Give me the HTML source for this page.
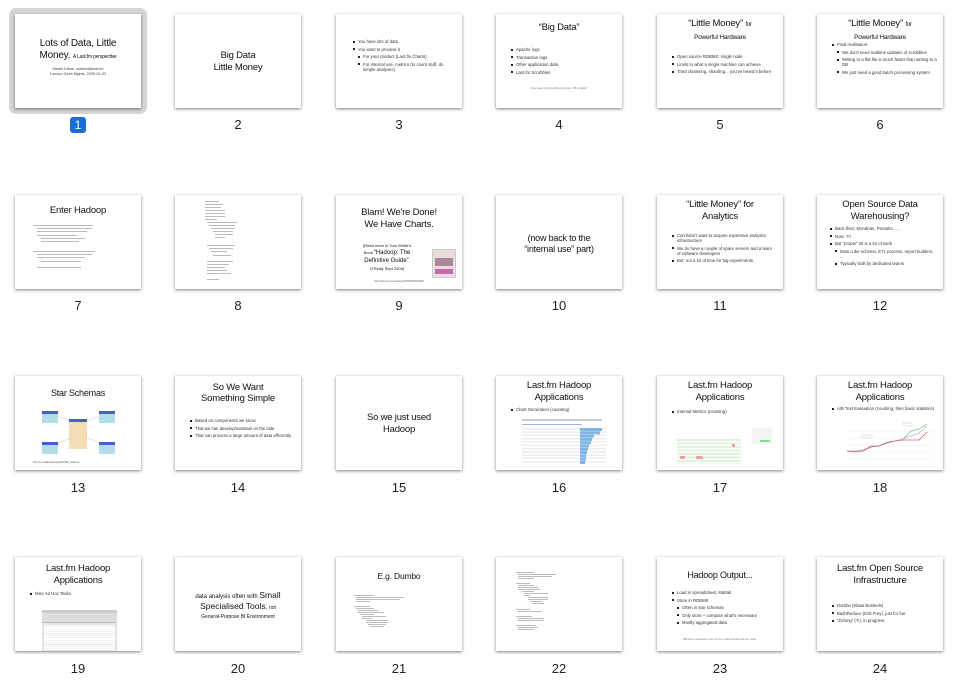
<!DOCTYPE html>
<html><head><meta charset="utf-8">
<style>
html,body{margin:0;padding:0;background:#fff;width:957px;height:684px;overflow:hidden;font-family:"Liberation Sans",sans-serif;}
.s{position:absolute;width:126px;height:94px;background:#fff;box-shadow:0 1px 3px rgba(0,0,0,.5);overflow:hidden;color:#111}
.t{position:absolute;left:0;right:0;text-align:center;font-size:9.5px;line-height:12px;letter-spacing:-.2px}
.c{position:absolute;left:0;right:0;text-align:center}
.b{position:absolute;font-size:4.3px;line-height:5.2px;color:#333}
.b p{margin:0 0 2.3px 0;padding-left:6px;position:relative}
.b p:before{content:"";position:absolute;left:1px;top:1.6px;width:2px;height:2px;background:#222}
.b p.i{margin-left:5px}
.n{position:absolute;width:126px;text-align:center;font-size:13px;line-height:15px;color:#222}
.cl{position:absolute;height:1px;background:#bbb}
.sel{position:absolute;left:9px;top:8px;width:138px;height:106px;background:#d6d6d6;border-radius:7px}
.badge{position:absolute;left:70px;top:117px;width:16px;height:16px;background:#1a6fd4;border-radius:3px;color:#fff;font-size:12px;line-height:16px;text-align:center}
</style></head><body>
<div class="sel"></div>

<!-- Row 1 -->
<div class="s" style="left:15px;top:14px">
 <div class="t" style="top:24px;font-size:10px;line-height:12px">Lots of Data, Little<br>Money. <span style="font-size:5px">A Last.fm perspective</span></div>
 <div class="c" style="top:53px;font-size:3.8px;line-height:5px;color:#444">Martin Dittus, martind@last.fm<br>London Geek Nights, 2009-04-23</div>
</div>
<div class="badge">1</div>

<div class="s" style="left:175px;top:14px">
 <div class="t" style="top:36px">Big Data<br>Little Money</div>
</div>
<div class="n" style="left:175px;top:117px">2</div>

<div class="s" style="left:336px;top:14px">
 <div class="b" style="left:16px;top:25px;width:100px">
 <p>You have lots of data</p><p>You want to process it</p><p class="i">For your product (Last.fm Charts)</p><p class="i">For internal use, metrics (to count stuff, do simple analyses)</p></div>
</div>
<div class="n" style="left:336px;top:117px">3</div>

<div class="s" style="left:496px;top:14px">
 <div class="t" style="top:8px">“Big Data”</div>
 <div class="b" style="left:14px;top:33px;width:100px"><p>Apache logs</p><p>Transaction logs</p><p>Other application data</p><p>Last.fm Scrobbles</p></div>
 <div class="c" style="top:73px;font-size:2.6px;color:#777">(how many is this justifying storing 1 TB of data?)</div>
</div>
<div class="n" style="left:496px;top:117px">4</div>

<div class="s" style="left:657px;top:14px">
 <div class="t" style="top:4px;line-height:11px">“Little Money” <span style="font-size:6px">for</span><br><span style="font-size:6.5px">Powerful Hardware</span></div>
 <div class="b" style="left:14px;top:40px;width:106px"><p>Open source RDBMS: single node</p><p>Limits to what a single machine can achieve</p><p>Tried clustering, sharding... you've heard it before</p></div>
</div>
<div class="n" style="left:657px;top:117px">5</div>

<div class="s" style="left:817px;top:14px">
 <div class="t" style="top:4px;line-height:11px">“Little Money” <span style="font-size:6px">for</span><br><span style="font-size:6.5px">Powerful Hardware</span></div>
 <div class="b" style="left:14px;top:28px;width:106px"><p>Final realisation:</p><p class="i">We don't need realtime updates of scrobbles</p><p class="i">Writing to a flat file is much faster than writing to a DB</p><p class="i">We just need a good batch processing system</p></div>
</div>
<div class="n" style="left:817px;top:117px">6</div>

<!-- Row 2 -->
<div class="s" style="left:15px;top:195px">
 <div class="t" style="top:10px">Enter Hadoop</div>
 <div class="cl" style="left:18px;top:30px;width:60px"></div><div class="cl" style="left:22px;top:33px;width:55px"></div><div class="cl" style="left:22px;top:36px;width:50px"></div><div class="cl" style="left:22px;top:40px;width:40px"></div><div class="cl" style="left:26px;top:43px;width:44px"></div><div class="cl" style="left:26px;top:46px;width:38px"></div>
 <div class="cl" style="left:18px;top:56px;width:62px"></div><div class="cl" style="left:22px;top:59px;width:55px"></div><div class="cl" style="left:22px;top:62px;width:48px"></div><div class="cl" style="left:26px;top:66px;width:40px"></div><div class="cl" style="left:22px;top:72px;width:44px"></div>
</div>
<div class="n" style="left:15px;top:298px">7</div>

<div class="s" style="left:175px;top:195px">
 <div class="cl" style="left:30px;top:6px;width:14px"></div><div class="cl" style="left:30px;top:9px;width:18px"></div><div class="cl" style="left:30px;top:12px;width:16px"></div><div class="cl" style="left:30px;top:15px;width:20px"></div><div class="cl" style="left:30px;top:18px;width:20px"></div><div class="cl" style="left:30px;top:21px;width:20px"></div><div class="cl" style="left:30px;top:24px;width:12px"></div><div class="cl" style="left:32px;top:27px;width:30px"></div><div class="cl" style="left:34px;top:30px;width:26px"></div><div class="cl" style="left:36px;top:33px;width:24px"></div><div class="cl" style="left:38px;top:36px;width:20px"></div><div class="cl" style="left:40px;top:39px;width:18px"></div><div class="cl" style="left:40px;top:42px;width:10px"></div>
 <div class="cl" style="left:32px;top:50px;width:28px"></div><div class="cl" style="left:34px;top:53px;width:24px"></div><div class="cl" style="left:36px;top:56px;width:16px"></div><div class="cl" style="left:38px;top:60px;width:18px"></div><div class="cl" style="left:32px;top:66px;width:26px"></div><div class="cl" style="left:32px;top:69px;width:22px"></div><div class="cl" style="left:32px;top:72px;width:18px"></div><div class="cl" style="left:32px;top:75px;width:20px"></div><div class="cl" style="left:32px;top:78px;width:24px"></div><div class="cl" style="left:32px;top:84px;width:12px"></div>
</div>
<div class="n" style="left:175px;top:298px">8</div>

<div class="s" style="left:336px;top:195px">
 <div class="t" style="top:12px;line-height:12px">Blam! We're Done!<br>We Have Charts.</div>
 <div class="c" style="top:47px;right:24px;font-size:4px;line-height:7px">(Read more in Tom White's<br>Book <span style="font-size:6px">“Hadoop: The<br>Definitive Guide”</span>,<br>O'Reilly Sept 2009)</div>
 <div style="position:absolute;left:96px;top:54px;width:22px;height:27px;background:#e8dcdc;border:1px solid #ccc"><div style="margin:8px 2px 0;height:8px;background:#a89"></div><div style="margin:3px 2px;height:5px;background:#c6a"></div></div>
 <div class="c" style="top:85px;font-size:2.6px;color:#666">http://feedt.ly.com/catalog/9780596521998/</div>
</div>
<div class="n" style="left:336px;top:298px">9</div>

<div class="s" style="left:496px;top:195px">
 <div class="t" style="top:38px;font-size:9px;line-height:11px">(now back to the<br>“internal use” part)</div>
</div>
<div class="n" style="left:496px;top:298px">10</div>

<div class="s" style="left:657px;top:195px">
 <div class="t" style="top:4px">“Little Money” for<br>Analytics</div>
 <div class="b" style="left:14px;top:38px;width:104px"><p>Can't/don't want to acquire expensive analytics infrastructure</p><p>We do have a couple of spare servers and a team of software developers</p><p>But: not a lot of time for big experiments</p></div>
</div>
<div class="n" style="left:657px;top:298px">11</div>

<div class="s" style="left:817px;top:195px">
 <div class="t" style="top:4px">Open Source Data<br>Warehousing?</div>
 <div class="b" style="left:12px;top:31px;width:106px"><p>Back then: Mondrian, Pentaho, ...</p><p>Now: ?!!</p><p>But "proper" BI is a lot of work</p><p class="i">Data cube schema, ETL process, report builders, ...</p><p class="i">Typically built by dedicated teams</p></div>
</div>
<div class="n" style="left:817px;top:298px">12</div>

<!-- Row 3 -->
<div class="s" style="left:15px;top:376px">
 <div class="t" style="top:11px;font-size:9px">Star Schemas</div>
 <svg style="position:absolute;left:0;top:0" width="126" height="94"><g stroke="#ccd" stroke-width=".6"><line x1="34" y1="38" x2="62" y2="46"/><line x1="92" y1="38" x2="68" y2="46"/><line x1="34" y1="70" x2="62" y2="60"/><line x1="92" y1="70" x2="68" y2="60"/></g>
 <rect x="27" y="35" width="16" height="12" fill="#b3dde8"/><rect x="27" y="35" width="16" height="3" fill="#4a5fc8"/>
 <rect x="84" y="35" width="16" height="12" fill="#b3dde8"/><rect x="84" y="35" width="16" height="3" fill="#4a5fc8"/>
 <rect x="27" y="66" width="16" height="12" fill="#b3dde8"/><rect x="27" y="66" width="16" height="3" fill="#4a5fc8"/>
 <rect x="84" y="66" width="16" height="12" fill="#b3dde8"/><rect x="84" y="66" width="16" height="3" fill="#4a5fc8"/>
 <rect x="54" y="43" width="18" height="30" fill="#f5dcb8"/><rect x="54" y="43" width="18" height="3" fill="#4a5fc8"/></svg>
 <div style="position:absolute;left:18px;top:85px;font-size:2.6px;color:#555">http://en.wikipedia.org/wiki/Star_schema</div>
</div>
<div class="n" style="left:15px;top:480px">13</div>

<div class="s" style="left:175px;top:376px">
 <div class="t" style="top:6px;line-height:11px">So We Want<br>Something Simple</div>
 <div class="b" style="left:14px;top:42px;width:104px"><p>Based on components we know</p><p>That we can develop/maintain on the side</p><p>That can process a large amount of data efficiently</p></div>
</div>
<div class="n" style="left:175px;top:480px">14</div>

<div class="s" style="left:336px;top:376px">
 <div class="t" style="top:36px">So we just used<br>Hadoop</div>
</div>
<div class="n" style="left:336px;top:480px">15</div>

<div class="s" style="left:496px;top:376px">
 <div class="t" style="top:4px">Last.fm Hadoop<br>Applications</div>
 <div class="b" style="left:14px;top:31px;width:104px"><p>Chart Generation (counting)</p></div>
 <div style="position:absolute;left:26px;top:43px;width:80px;height:2px;background:#ccc"></div>
 <div style="position:absolute;left:26px;top:48px;width:60px;height:1px;background:#9bd"></div>
 <div style="position:absolute;left:26px;top:52px;width:84px;height:36px;background:repeating-linear-gradient(#eee 0 1.5px,#fff 1.5px 3.3px)"></div>
 <svg style="position:absolute;left:84px;top:52px" width="30" height="36"><g fill="#7fb6e4"><rect x="0" y="0" width="22" height="3"/><rect x="0" y="3.3" width="20" height="3"/><rect x="0" y="6.6" width="14" height="3"/><rect x="0" y="9.9" width="12" height="3"/><rect x="0" y="13.2" width="11" height="3"/><rect x="0" y="16.5" width="9" height="3"/><rect x="0" y="19.8" width="8" height="3"/><rect x="0" y="23.1" width="7" height="3"/><rect x="0" y="26.4" width="6" height="3"/><rect x="0" y="29.7" width="6" height="3"/><rect x="0" y="33" width="5" height="3"/></g></svg>
</div>
<div class="n" style="left:496px;top:480px">16</div>

<div class="s" style="left:657px;top:376px">
 <div class="t" style="top:4px">Last.fm Hadoop<br>Applications</div>
 <div class="b" style="left:14px;top:33px;width:104px"><p>Internal Metrics (counting)</p></div>
 <div style="position:absolute;left:95px;top:52px;width:20px;height:16px;background:#f4f4f4"><div style="margin:12px 0 0 8px;width:10px;height:2px;background:#8d8"></div></div>
 <div style="position:absolute;left:20px;top:63px;width:64px;height:25px;background:repeating-linear-gradient(#dff3dc 0 2px,#fff 2px 3.5px)"></div>
 <div style="position:absolute;left:23px;top:80px;width:5px;height:3px;background:#f3a0a0"></div>
 <div style="position:absolute;left:39px;top:80px;width:7px;height:3px;background:#f3a0a0"></div>
 <div style="position:absolute;left:75px;top:68px;width:3px;height:3px;background:#f3a0a0"></div>
</div>
<div class="n" style="left:657px;top:480px">17</div>

<div class="s" style="left:817px;top:376px">
 <div class="t" style="top:4px">Last.fm Hadoop<br>Applications</div>
 <div class="b" style="left:14px;top:30px;width:104px"><p>A/B Test Evaluation (counting, then basic statistics)</p></div>
 <svg style="position:absolute;left:0;top:0" width="126" height="94"><g stroke="#eee" stroke-width=".5"><line x1="30" y1="55" x2="116" y2="55"/><line x1="30" y1="62" x2="116" y2="62"/><line x1="30" y1="69" x2="116" y2="69"/><line x1="30" y1="76" x2="116" y2="76"/><line x1="30" y1="83" x2="116" y2="83"/></g>
 <polyline fill="none" stroke="#9b9" stroke-width=".8" points="30,75 38,75 46,74 54,70 62,70 70,66 78,65 86,63 94,55 102,53 110,48"/>
 <polyline fill="none" stroke="#abd" stroke-width=".8" points="30,75 38,75 46,74 54,70 62,70 70,66 78,65 86,63 94,60 102,57 110,50"/>
 <polyline fill="none" stroke="#c66" stroke-width=".8" points="30,75 38,76 46,75 54,71 62,70 70,67 78,65 86,64 94,64 102,64 110,56"/>
 <rect x="45" y="59" width="10" height="3" fill="#fff" stroke="#aaa" stroke-width=".3"/><rect x="86" y="47" width="9" height="3" fill="#fff" stroke="#aaa" stroke-width=".3"/></svg>
</div>
<div class="n" style="left:817px;top:480px">18</div>

<!-- Row 4 -->
<div class="s" style="left:15px;top:557px">
 <div class="t" style="top:6px">Last.fm Hadoop<br>Applications</div>
 <div class="b" style="left:14px;top:34px;width:104px"><p>Misc Ad Hoc Tasks</p></div>
 <div style="position:absolute;left:27px;top:53px;width:75px;height:41px;background:#e4e4e4;border-radius:2px 2px 0 0">
  <div style="height:3px;background:#ccc"></div><div style="height:9px;background:#ddd;border-bottom:1px solid #bbb"></div>
  <div style="margin:2px;height:25px;background:repeating-linear-gradient(#fff 0 1.6px,#e8e8e8 1.6px 2.2px)"></div></div>
</div>
<div class="n" style="left:15px;top:661px">19</div>

<div class="s" style="left:175px;top:557px">
 <div class="c" style="top:34px;font-size:6px;line-height:9px"><span>data analysis often with </span><span style="font-size:8.5px">Small</span><br><span style="font-size:8.5px">Specialised Tools</span>, <span style="font-size:5px">not</span><br><span style="font-size:5px">General-Purpose BI Environment</span></div>
</div>
<div class="n" style="left:175px;top:661px">20</div>

<div class="s" style="left:336px;top:557px">
 <div class="t" style="top:13px;font-size:8.5px">E.g. Dumbo</div>
 <div class="cl" style="left:18px;top:38px;width:20px"></div><div class="cl" style="left:20px;top:40px;width:48px"></div><div class="cl" style="left:20px;top:42px;width:44px"></div><div class="cl" style="left:20px;top:44px;width:14px"></div>
 <div class="cl" style="left:18px;top:49px;width:16px"></div><div class="cl" style="left:20px;top:51px;width:18px"></div><div class="cl" style="left:22px;top:53px;width:20px"></div><div class="cl" style="left:22px;top:55px;width:26px"></div><div class="cl" style="left:24px;top:57px;width:14px"></div><div class="cl" style="left:26px;top:59px;width:24px"></div><div class="cl" style="left:26px;top:61px;width:10px"></div><div class="cl" style="left:30px;top:63px;width:22px"></div><div class="cl" style="left:30px;top:65px;width:22px"></div><div class="cl" style="left:32px;top:67px;width:18px"></div><div class="cl" style="left:34px;top:69px;width:14px"></div>
</div>
<div class="n" style="left:336px;top:661px">21</div>

<div class="s" style="left:496px;top:557px">
 <div class="cl" style="left:20px;top:15px;width:18px"></div><div class="cl" style="left:22px;top:17px;width:38px"></div><div class="cl" style="left:22px;top:19px;width:34px"></div><div class="cl" style="left:22px;top:21px;width:16px"></div>
 <div class="cl" style="left:20px;top:26px;width:14px"></div><div class="cl" style="left:22px;top:28px;width:16px"></div><div class="cl" style="left:22px;top:30px;width:20px"></div><div class="cl" style="left:22px;top:32px;width:22px"></div><div class="cl" style="left:26px;top:34px;width:12px"></div><div class="cl" style="left:28px;top:36px;width:24px"></div><div class="cl" style="left:28px;top:38px;width:6px"></div><div class="cl" style="left:32px;top:40px;width:20px"></div><div class="cl" style="left:32px;top:42px;width:20px"></div><div class="cl" style="left:34px;top:44px;width:12px"></div><div class="cl" style="left:36px;top:46px;width:12px"></div>
 <div class="cl" style="left:20px;top:52px;width:14px"></div><div class="cl" style="left:22px;top:54px;width:24px"></div>
 <div class="cl" style="left:20px;top:59px;width:16px"></div><div class="cl" style="left:22px;top:61px;width:26px"></div><div class="cl" style="left:22px;top:63px;width:26px"></div>
 <div class="cl" style="left:20px;top:68px;width:20px"></div><div class="cl" style="left:22px;top:70px;width:20px"></div><div class="cl" style="left:22px;top:72px;width:16px"></div>
</div>
<div class="n" style="left:496px;top:661px">22</div>

<div class="s" style="left:657px;top:557px">
 <div class="t" style="top:12px;font-size:9px">Hadoop Output...</div>
 <div class="b" style="left:14px;top:33px;width:108px"><p>Load in spreadsheet, Matlab</p><p>Store in RDBMS</p><p class="i">Often in star schemas</p><p class="i">Only store + compute what's necessary</p><p class="i">Mostly aggregated data</p></div>
 <div style="position:absolute;left:26px;top:81px;font-size:2.4px;color:#777">(Bill Ahern mentioned a query on the cyclical log table with 24+ rows)</div>
</div>
<div class="n" style="left:657px;top:661px">23</div>

<div class="s" style="left:817px;top:557px">
 <div class="t" style="top:6px">Last.fm Open Source<br>Infrastructure</div>
 <div class="b" style="left:14px;top:46px;width:104px"><p>Dumbo (Klaas Bosteels)</p><p>BashReduce (Erik Frey), just for fun</p><p>“Zohmg” (?!), in progress</p></div>
</div>
<div class="n" style="left:817px;top:661px">24</div>

</body></html>
